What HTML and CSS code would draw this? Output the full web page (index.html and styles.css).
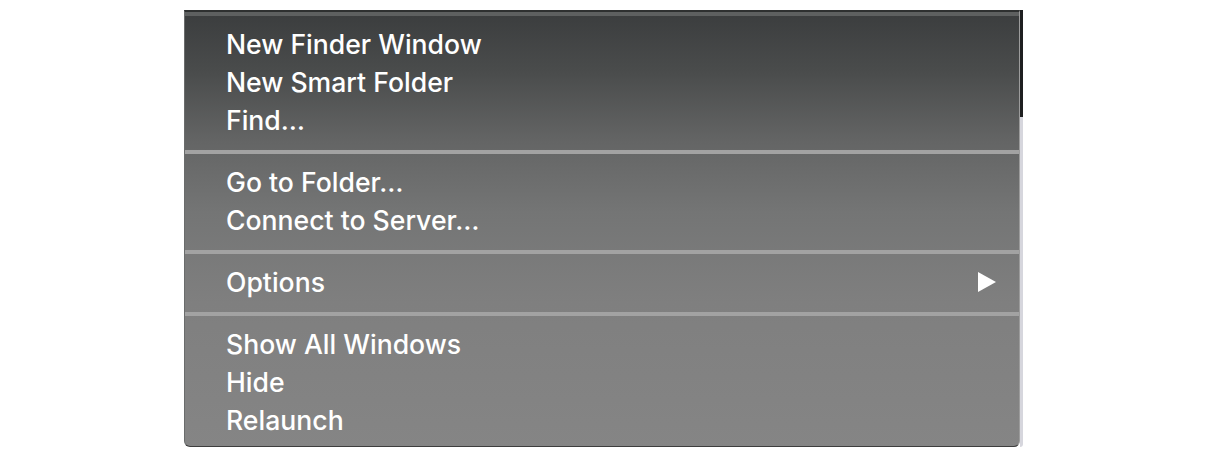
FILE: index.html
```html
<!DOCTYPE html>
<html>
<head>
<meta charset="utf-8">
<link rel="stylesheet" href="styles.css">
</head>
<body>
<div class="frame">
  <div class="menu">
    <div class="group first">
      <div class="item">New Finder Window</div>
      <div class="item">New Smart Folder</div>
      <div class="item">Find…</div>
    </div>
    <div class="group">
      <div class="item">Go to Folder…</div>
      <div class="item">Connect to Server…</div>
    </div>
    <div class="group">
      <div class="item"><span>Options</span><svg class="arrow" width="18" height="20" viewBox="0 0 18 20"><polygon points="0,0 18,10 0,20" fill="#fff"/></svg></div>
    </div>
    <div class="group last">
      <div class="item">Show All Windows</div>
      <div class="item">Hide</div>
      <div class="item">Relaunch</div>
    </div>
  </div>
  <div class="edge">
    <div class="edge-dark"></div>
    <div class="edge-light"></div>
  </div>
</div>
</body>
</html>
```
FILE: styles.css
```css
html, body {
  margin: 0;
  padding: 0;
  background: #ffffff;
}
.frame {
  display: flex;
  margin: 10px 0 0 184px;
  width: 839px;
  height: 437px;
}
.menu {
  width: 836px;
  box-sizing: border-box;
  display: flex;
  flex-direction: column;
  border-top: 2px solid #2e3030;
  border-left: 1px solid #6a6c6c;
  border-right: 1px solid #9c9c9c;
  border-bottom: 1px solid #3e3e3e;
  border-radius: 0 0 6px 6px;
  background: linear-gradient(180deg, #3b3d3e 0px, #4a4c4c 60px, #646565 130px, #747575 200px, #7f7f7f 290px, #858585 436px);
  font-family: Inter, "Liberation Sans", sans-serif;
  font-size: 26.6px;
  font-weight: 500;
  color: #ffffff;
}
.group {
  border-top: 4px solid #a2a2a2;
  padding: 9px 0 11px;
}
.group.first {
  border-top-color: #5e6060;
}
.group.last {
  padding-bottom: 7px;
}
.item {
  box-sizing: border-box;
  height: 38px;
  line-height: 37px;
  padding: 1px 23px 0 41px;
  display: flex;
  align-items: center;
  justify-content: space-between;
}
.arrow {
  display: block;
  margin-top: -1px;
}
.edge {
  width: 3px;
  display: flex;
  flex-direction: column;
}
.edge-dark {
  height: 107px;
  background: #1e1f20;
}
.edge-light {
  flex: 1;
  background: #d6d6dd;
  border-bottom-right-radius: 3px;
}
```
